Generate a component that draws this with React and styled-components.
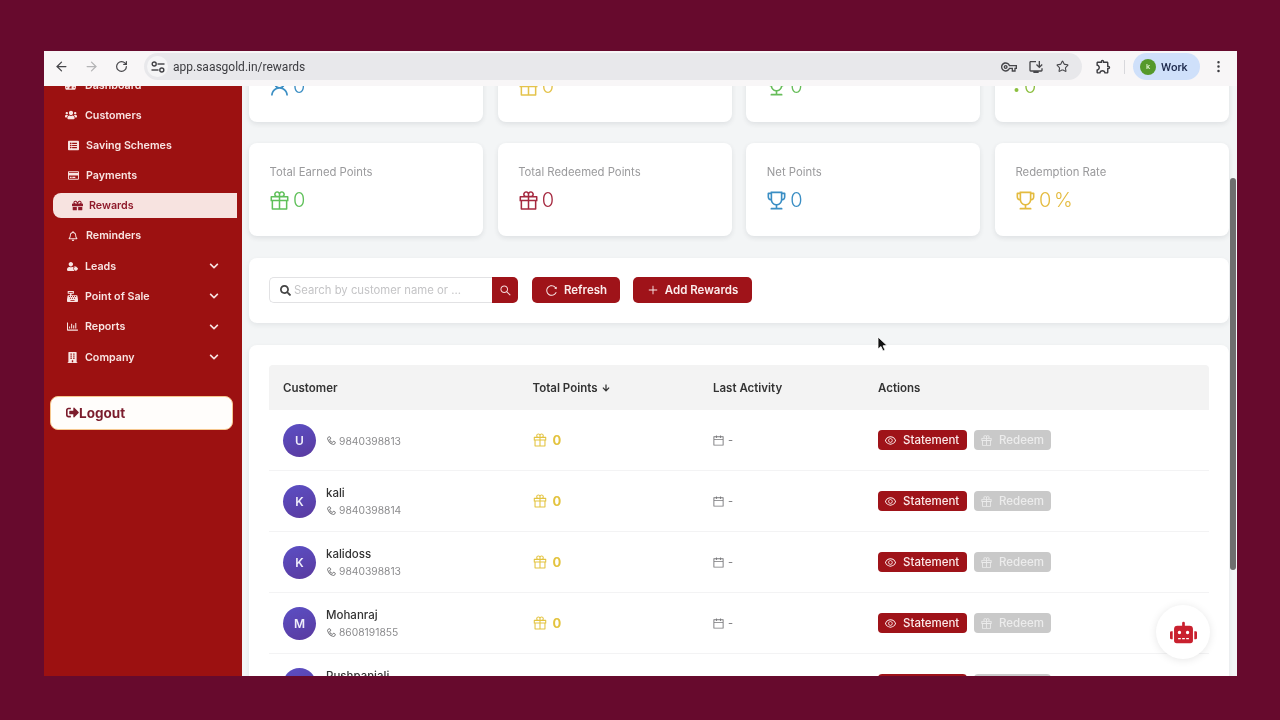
import React from 'react';
import styled, { createGlobalStyle } from 'styled-components';
import {
  AiOutlineGift, AiOutlineTrophy, AiOutlineEye, AiOutlinePhone, AiOutlineCalendar,
  AiOutlinePlus, AiOutlineReload, AiOutlineSearch, AiOutlineUser,
} from 'react-icons/ai';
import {
  FaUsers, FaGift, FaRegBell, FaUserTag, FaCashRegister, FaRegChartBar, FaBuilding,
  FaChevronDown, FaRobot, FaSignOutAlt, FaTachometerAlt, FaSearch, FaArrowDown, FaListAlt, FaRegCreditCard,
} from 'react-icons/fa';
import { MdOutlineVpnKey, MdOutlineInstallDesktop, MdOutlineExtension } from 'react-icons/md';
import { ArrowLeft, ArrowRight, RotateCw, Star, EllipsisVertical } from 'lucide-react';

const GlobalStyle = createGlobalStyle`
  html, body { margin: 0; padding: 0; background: #670a2d; }
  body { font-family: "Inter", "Liberation Sans", sans-serif; }
  * { box-sizing: border-box; }
`;

const Stage = styled.div`
  width: 1280px;
  height: 720px;
  padding: 51px 43px 44px 44px;
  background: #670a2d;
  overflow: hidden;
`;

const Window = styled.div`
  position: relative;
  height: 100%;
  display: flex;
  flex-direction: column;
  overflow: hidden;
  background: #f3f5f6;
  filter: blur(0.5px);
`;

/* browser toolbar */
const Toolbar = styled.div`
  flex: 0 0 35px;
  display: flex;
  align-items: center;
  padding: 0 1px 4px 2px;
  background: #f8f6f7;
  z-index: 2;
`;

const NavIcon = styled.span`
  width: 30px;
  display: flex;
  justify-content: center;
  color: ${p => (p.$off ? '#b4b4b6' : '#46464a')};
`;

const Omnibox = styled.div`
  flex: 1;
  height: 27px;
  margin-left: 8px;
  display: flex;
  align-items: center;
  padding: 0 6px 0 3px;
  border-radius: 14px;
  background: #e8e8eb;
`;

const TuneBadge = styled.span`
  width: 21px;
  height: 21px;
  margin-right: 5px;
  display: flex;
  align-items: center;
  justify-content: center;
  border-radius: 50%;
  background: #f5f5f6;
  color: #404044;
`;

const Url = styled.span`
  flex: 1;
  font-family: "Roboto", "Liberation Sans", sans-serif;
  font-size: 12px;
  color: #3c3c40;
`;

const OmniIcon = styled.span`
  width: 27px;
  display: flex;
  justify-content: center;
  color: #46464a;
`;

const Puzzled = styled.span`
  width: 42px;
  display: flex;
  justify-content: center;
  color: #3c3c40;
`;

const Divider = styled.span`
  width: 1px;
  height: 14px;
  background: #d8d8dc;
  margin-right: 8px;
`;

const ProfileChip = styled.div`
  width: 67px;
  height: 27px;
  display: flex;
  align-items: center;
  gap: 5px;
  padding-left: 7px;
  border-radius: 14px;
  background: #cfe0fa;
  font-family: "Roboto", "Liberation Sans", sans-serif;
  font-size: 11.5px;
  font-weight: 500;
  color: #1e2a4d;
`;

const ProfileDot = styled.span`
  width: 16px;
  height: 16px;
  display: flex;
  align-items: center;
  justify-content: center;
  border-radius: 50%;
  background: #55992b;
  color: #d8efc8;
  font-size: 8px;
`;

const MoreIcon = styled.span`
  width: 36px;
  display: flex;
  justify-content: center;
  color: #3c3c40;
`;

/* app */
const AppBody = styled.div`
  flex: 1;
  min-height: 0;
  display: flex;
`;

const Sidebar = styled.aside`
  flex: 0 0 198px;
  background: #9c1111;
  overflow: hidden;
`;

const Nav = styled.nav`
  margin-top: -16px;
  display: flex;
  flex-direction: column;
  padding: 0 5px 0 9px;
`;

const NavItem = styled.div`
  height: ${p => p.$h || 30}px;
  display: flex;
  align-items: center;
  padding-left: ${p => p.$inset}px;
  padding-right: 18px;
  gap: ${p => p.$gap || 9}px;
  color: #f8e4e2;
  font-size: 10.7px;
  font-weight: 600;
`;

const ActiveItem = styled.div`
  height: 25px;
  margin: 2.5px 0;
  display: flex;
  align-items: center;
  gap: 6px;
  padding-left: 19px;
  border-radius: 8px 0 0 8px;
  background: #f7e3e0;
  color: #8f1a2a;
  font-size: 10.7px;
  font-weight: 600;
`;

const Chevron = styled(FaChevronDown)`
  margin-left: auto;
  font-size: 10px;
`;

const LogoutButton = styled.div`
  width: 183px;
  height: 34px;
  margin: 23.8px 0 0 -3px;
  display: flex;
  align-items: center;
  padding-left: 15px;
  border-radius: 8px;
  border: 1.5px solid #f6c78e;
  background: #fffdfb;
  color: #7b1c2c;
  font-size: 13.5px;
  font-weight: 700;
`;

const Main = styled.main`
  flex: 1;
  min-width: 0;
  padding: 0 8px 0 7px;
  overflow: hidden;
`;

const Scroller = styled.div`
  margin-top: -57px;
  display: flex;
  flex-direction: column;
  gap: 22px;
`;

const StatGrid = styled.div`
  display: grid;
  grid-template-columns: repeat(4, 1fr);
  gap: 21px 14.67px;
`;

const StatCard = styled.div`
  height: 93px;
  padding: 21px 20px 0 20.5px;
  border-radius: 8px;
  background: #fff;
  box-shadow: 0 2px 5px rgba(40, 50, 60, 0.1);
`;

const StatLabel = styled.div`
  font-size: 11.3px;
  line-height: 16px;
  color: #9a9a9c;
`;

const StatValue = styled.div`
  margin: 7px 0 0 -1.5px;
  display: flex;
  align-items: center;
  gap: 2px;
  font-size: 20px;
  line-height: 26px;
  font-weight: 300;
  word-spacing: -3px;
  color: ${p => p.$color};
`;

const Panel = styled.section`
  border-radius: 8px;
  background: #fff;
  box-shadow: 0 2px 5px rgba(40, 50, 60, 0.08);
`;

const ToolbarPanel = styled(Panel)`
  height: 65px;
  display: flex;
  align-items: center;
  padding: 0 20px 1px 20px;
`;

const SearchBox = styled.div`
  width: 223px;
  height: 26px;
  display: flex;
  align-items: center;
  gap: 3px;
  padding-left: 10px;
  border: 1px solid #e2e2e4;
  border-right: 0;
  border-radius: 5px 0 0 5px;
  color: #444;
  font-size: 11.3px;
`;

const Placeholder = styled.span`
  color: #c4c4c6;
`;

const SearchButton = styled.div`
  width: 26px;
  height: 26px;
  display: flex;
  align-items: center;
  justify-content: center;
  border-radius: 0 5px 5px 0;
  background: #9f1319;
  color: #f6dcdc;
`;

const RedButton = styled.div`
  width: ${p => p.$w}px;
  height: 26px;
  margin-left: ${p => p.$ml}px;
  display: flex;
  align-items: center;
  justify-content: center;
  gap: 6px;
  border-radius: 5px;
  background: #9f1319;
  color: #fbecec;
  font-size: 11.5px;
  font-weight: 600;
`;

const TablePanel = styled(Panel)`
  padding: 20px 20px 0 20px;
`;

const Row = styled.div`
  display: grid;
  grid-template-columns: 249.5px 180.5px 165px 1fr;
  align-items: center;
`;

const HeadRow = styled(Row)`
  height: 45px;
  background: #f3f3f3;
  border-radius: 4px 4px 0 0;
`;

const HeadCell = styled.div`
  display: flex;
  align-items: center;
  gap: 4px;
  padding-left: 14px;
  font-size: 11.5px;
  font-weight: 600;
  color: #333;
`;

const BodyRow = styled(Row)`
  height: 61px;
  border-bottom: 1px solid #f3f3f4;
`;

const Cell = styled.div`
  display: flex;
  align-items: center;
  padding-left: 14px;
`;

const Avatar = styled.div`
  flex: 0 0 33px;
  height: 33px;
  display: flex;
  align-items: center;
  justify-content: center;
  border-radius: 50%;
  background: linear-gradient(160deg, #5b4fc4, #5a3a9f);
  color: #f0eefb;
  font-size: 12px;
  font-weight: 600;
`;

const Who = styled.div`
  margin-left: 10px;
  padding-top: 1px;
  display: flex;
  flex-direction: column;
  gap: 3px;
`;

const Name = styled.div`
  font-size: 11.5px;
  line-height: 14px;
  font-weight: 500;
  color: #333;
`;

const Phone = styled.div`
  display: flex;
  align-items: center;
  gap: 2px;
  font-size: 10.3px;
  line-height: 14px;
  color: #8b8b8d;
`;

const PhoneIcon = styled(AiOutlinePhone)`
  color: #6f6f72;
  transform: scaleX(-1);
`;

const Points = styled(Cell)`
  gap: 5px;
  margin-left: -1px;
  color: #e3c33f;
  font-size: 13px;
  font-weight: 700;
`;

const Activity = styled(Cell)`
  gap: 3px;
  margin-left: -1px;
  color: #77777a;
  font-size: 11px;
`;

const Actions = styled(Cell)`
  gap: 7px;
`;

const ActionButton = styled.div`
  height: 20px;
  width: ${p => p.$w}px;
  display: flex;
  align-items: center;
  gap: 6px;
  padding-left: 6px;
  border-radius: 4px;
  background: ${p => (p.$disabled ? '#c9c9c9' : '#9f1319')};
  color: ${p => (p.$disabled ? '#ececec' : '#fbeaea')};
  font-size: 11.5px;
  font-weight: 500;
`;

/* overlays */
const ScrollThumb = styled.div`
  position: absolute;
  left: 1185.5px;
  top: 127px;
  width: 6px;
  height: 392px;
  border-radius: 3px;
  background: #6e6e6e;
`;

const ChatBubble = styled.div`
  position: absolute;
  left: 1112px;
  top: 554px;
  width: 54px;
  height: 54px;
  display: flex;
  align-items: center;
  justify-content: center;
  border-radius: 50%;
  background: #fff;
  box-shadow: 0 1px 8px rgba(0, 0, 0, 0.1);
  color: #c9202e;
`;

const Cursor = styled.svg`
  position: absolute;
  left: 833px;
  top: 285px;
`;

// chrome's two-row "site settings" mark
const TuneIcon = () => (
  <svg width="14" height="12" viewBox="0 0 14 12" fill="none" stroke="currentColor" strokeWidth="1.4">
    <circle cx="3.2" cy="3" r="2" />
    <path d="M6.5 3H13.5" />
    <circle cx="10.8" cy="9" r="2" />
    <path d="M0.5 9H7.5" />
  </svg>
);

// only the dot at the bottom of this mark shows below the browser bar
const BangIcon = () => (
  <svg width="8" height="20" viewBox="0 0 8 20">
    <rect x="1" y="0" width="2" height="9" fill="currentColor" />
    <circle cx="2.5" cy="14" r="2" fill="currentColor" />
  </svg>
);

const stats = [
  { label: 'Total Customers', icon: <AiOutlineUser size={23} />, color: '#3c8fc4', value: '0' },
  { label: 'Total Rewards', icon: <AiOutlineGift size={23} />, color: '#e4c34b', value: '0' },
  { label: 'Active Rewards', icon: <AiOutlineTrophy size={23} />, color: '#67bd5a', value: '0' },
  { label: 'Growth', icon: <BangIcon />, color: '#8cbf3f', value: '0' },
  { label: 'Total Earned Points', icon: <AiOutlineGift size={23} />, color: '#5fc05a', value: '0' },
  { label: 'Total Redeemed Points', icon: <AiOutlineGift size={23} />, color: '#a5283f', value: '0' },
  { label: 'Net Points', icon: <AiOutlineTrophy size={23} />, color: '#3a8ec4', value: '0' },
  { label: 'Redemption Rate', icon: <AiOutlineTrophy size={23} />, color: '#e4bb3f', value: '0 %' },
];

const customers = [
  { letter: 'U', name: '', phone: '9840398813' },
  { letter: 'K', name: 'kali', phone: '9840398814' },
  { letter: 'K', name: 'kalidoss', phone: '9840398813' },
  { letter: 'M', name: 'Mohanraj', phone: '8608191855' },
  { letter: 'P', name: 'Pushpanjali', phone: '9840398815' },
];

function App() {
  return (
    <>
      <GlobalStyle />
      <Stage>
        <Window>
          <Toolbar>
            <NavIcon><ArrowLeft size={15} /></NavIcon>
            <NavIcon $off><ArrowRight size={15} /></NavIcon>
            <NavIcon><RotateCw size={13} strokeWidth={2.2} /></NavIcon>
            <Omnibox>
              <TuneBadge><TuneIcon /></TuneBadge>
              <Url>app.saasgold.in/rewards</Url>
              <OmniIcon><MdOutlineVpnKey size={16} /></OmniIcon>
              <OmniIcon><MdOutlineInstallDesktop size={16} /></OmniIcon>
              <OmniIcon><Star size={13} strokeWidth={2} /></OmniIcon>
            </Omnibox>
            <Puzzled><MdOutlineExtension size={17} /></Puzzled>
            <Divider />
            <ProfileChip>
              <ProfileDot>k</ProfileDot>
              Work
            </ProfileChip>
            <MoreIcon><EllipsisVertical size={15} /></MoreIcon>
          </Toolbar>
          <AppBody>
            <Sidebar>
              <Nav>
                <NavItem $inset={12}><FaTachometerAlt size={11} />Dashboard</NavItem>
                <NavItem $inset={12} $gap={8}><FaUsers size={12} />Customers</NavItem>
                <NavItem $inset={15} $gap={7}><FaListAlt size={11} />Saving Schemes</NavItem>
                <NavItem $inset={15} $gap={7}><FaRegCreditCard size={11} />Payments</NavItem>
                <ActiveItem><FaGift size={11} />Rewards</ActiveItem>
                <NavItem $h={31} $inset={15} $gap={8}><FaRegBell size={10} />Reminders</NavItem>
                <NavItem $h={30.3} $inset={14} $gap={7}><FaUserTag size={11} />Leads<Chevron /></NavItem>
                <NavItem $h={30.3} $inset={14} $gap={7}><FaCashRegister size={11} />Point of Sale<Chevron /></NavItem>
                <NavItem $h={30.3} $inset={14} $gap={7}><FaRegChartBar size={11} />Reports<Chevron /></NavItem>
                <NavItem $h={30.3} $inset={14} $gap={7}><FaBuilding size={11} />Company<Chevron /></NavItem>
                <LogoutButton><FaSignOutAlt size={13} />Logout</LogoutButton>
              </Nav>
            </Sidebar>
            <Main>
              <Scroller>
                <StatGrid>
                  {stats.map(s => (
                    <StatCard key={s.label}>
                      <StatLabel>{s.label}</StatLabel>
                      <StatValue $color={s.color}>{s.icon}{s.value}</StatValue>
                    </StatCard>
                  ))}
                </StatGrid>
                <ToolbarPanel>
                  <SearchBox>
                    <FaSearch size={11} />
                    <Placeholder>Search by customer name or ...</Placeholder>
                  </SearchBox>
                  <SearchButton><AiOutlineSearch size={13} /></SearchButton>
                  <RedButton $w={88} $ml={14}><AiOutlineReload size={13} />Refresh</RedButton>
                  <RedButton $w={119} $ml={13}><AiOutlinePlus size={12} />Add Rewards</RedButton>
                </ToolbarPanel>
                <TablePanel>
                  <HeadRow>
                    <HeadCell>Customer</HeadCell>
                    <HeadCell>Total Points <FaArrowDown size={8} /></HeadCell>
                    <HeadCell>Last Activity</HeadCell>
                    <HeadCell>Actions</HeadCell>
                  </HeadRow>
                  {customers.map((c, i) => (
                    <BodyRow key={i}>
                      <Cell>
                        <Avatar>{c.letter}</Avatar>
                        <Who>
                          {c.name && <Name>{c.name}</Name>}
                          <Phone><PhoneIcon size={11} />{c.phone}</Phone>
                        </Who>
                      </Cell>
                      <Points><AiOutlineGift size={16} />0</Points>
                      <Activity><AiOutlineCalendar size={13} />-</Activity>
                      <Actions>
                        <ActionButton $w={89}><AiOutlineEye size={13} />Statement</ActionButton>
                        <ActionButton $w={77} $disabled><AiOutlineGift size={13} />Redeem</ActionButton>
                      </Actions>
                    </BodyRow>
                  ))}
                </TablePanel>
              </Scroller>
            </Main>
          </AppBody>
          <ScrollThumb />
          <ChatBubble><FaRobot size={27} /></ChatBubble>
          <Cursor width="12" height="17" viewBox="0 0 12 17">
            <path d="M1 1 L1 13 L4 10.5 L6 15 L8 14 L6 9.8 L10 9.5 Z" fill="#111" stroke="#fff" strokeWidth="0.8" />
          </Cursor>
        </Window>
      </Stage>
    </>
  );
}

export default App;
